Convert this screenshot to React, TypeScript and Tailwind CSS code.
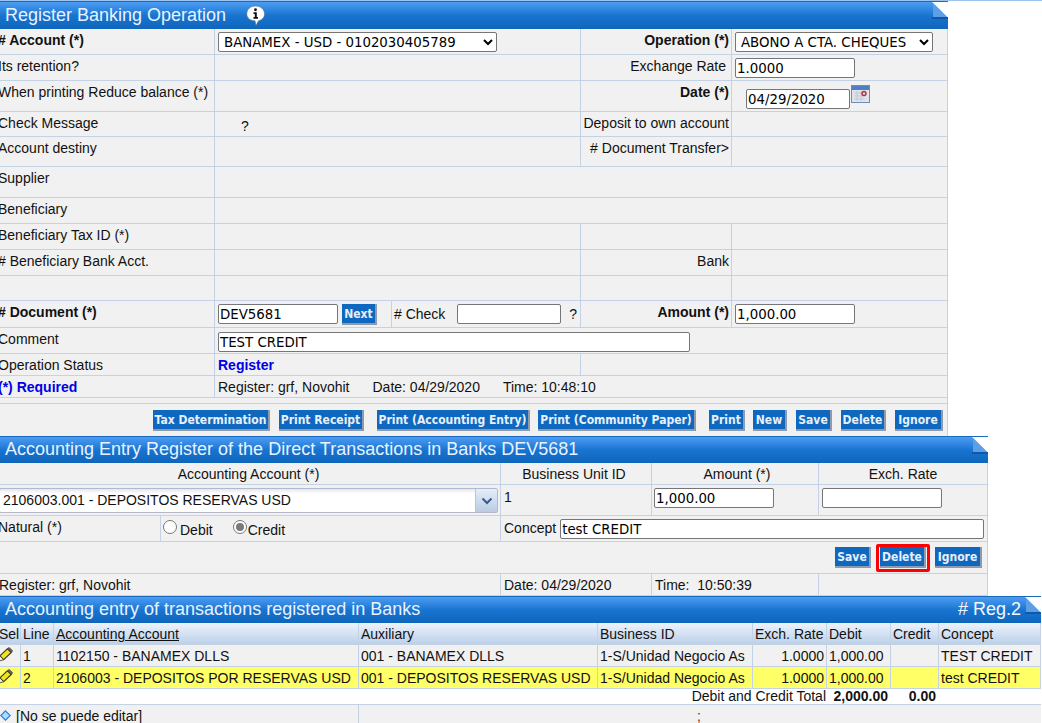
import type { ReactNode } from "react";

const input =
  "block h-[20px] rounded-[2px] border border-[#767676] bg-white px-[1px] [font-family:DejaVu_Sans,Verdana,sans-serif] text-[13.33px] text-black outline-none";

function Fold() {
  return (
    <svg className="absolute right-0 top-0" width="16" height="18" viewBox="0 0 16 18">
      <polygon points="0,0 16,0 16,16" fill="#ffffff" />
      <polygon points="1,1 15,15 1,15" fill="#5c9fe6" />
      <rect x="0" y="15" width="16" height="2" fill="#0d58a8" />
    </svg>
  );
}

function Header({ className = "h-[27px]", children }: { className?: string; children: ReactNode }) {
  return (
    <div className={"relative flex shrink-0 items-center justify-between border-t border-[#1a6abf] bg-gradient-to-b from-[#4b9df2] via-[#1874d1] to-[#0f65ba] pb-[2px] pl-[8px] pr-[20px] text-[18px] text-[#e8f3ff] " + className}>
      {children}
      <Fold />
    </div>
  );
}

function Cell({ className = "", children }: { className?: string; children?: ReactNode }) {
  return (
    <div className={"overflow-hidden whitespace-nowrap border-b border-r border-[#c3d2e5] " + className}>
      {children}
    </div>
  );
}

function Label({ children }: { children: ReactNode }) {
  return <Cell className="pl-[1px] pt-[3px]">{children}</Cell>;
}

function Btn({ className = "", children }: { className?: string; children: ReactNode }) {
  return (
    <button className={"h-[21px] shrink-0 border-b-2 border-r-2 border-[#8d9bad] bg-[#0f68bf] text-center [font-family:DejaVu_Sans_Condensed,DejaVu_Sans,Verdana,sans-serif] text-[12px] font-bold leading-[20px] text-[#e6f0fb] " + className}>
      {children}
    </button>
  );
}

function InfoIcon() {
  return (
    <svg className="ml-[20px] mt-[2px] shrink-0" width="20" height="21" viewBox="0 0 20 20" preserveAspectRatio="none">
      <path d="M9.5 1C14.5 1 18.5 4 18.5 8.5C18.5 12 15.5 14.5 12.5 15L10 19.5L9 15C4.5 15 0.8 12.5 0.8 8.5C0.8 4 4.5 1 9.5 1Z" fill="#fff" stroke="#5d7488" strokeWidth="0.6" />
      <circle cx="9.5" cy="4.6" r="1.4" fill="#111" />
      <path d="M7.5 7H10.8V11.5H12V13H7.5V11.5H8.8V8.5H7.5Z" fill="#111" />
    </svg>
  );
}

function CalendarIcon() {
  return (
    <svg className="shrink-0" width="19" height="18" viewBox="0 0 19 18">
      <rect x="0.5" y="0.5" width="18" height="17" fill="#dfe3ea" stroke="#6f8db3" />
      <rect x="1" y="1" width="17" height="4" fill="#4f7fc0" />
      <path d="M3 8H14M3 11H14M3 14H14M6 6V16M10 6V16" stroke="#c3c9d3" strokeWidth="1" />
      <circle cx="13" cy="8.5" r="2" fill="none" stroke="#b03040" strokeWidth="1.4" />
    </svg>
  );
}

function PencilIcon() {
  return (
    <svg className="shrink-0" width="15" height="15" viewBox="0 0 16 16">
      <polygon points="10,2 14,6 6,13.5 2,9.5" fill="#f2e21a" stroke="#3a3a24" strokeWidth="1.2" />
      <polygon points="10.5,1.5 12,0.5 15.5,4 14.5,5.8" fill="#6a6a6a" stroke="#333" strokeWidth="0.8" />
      <polygon points="2,9.5 6,13.5 0.8,15.2" fill="#f4f0dc" stroke="#3a3a24" strokeWidth="0.9" />
    </svg>
  );
}

function Diamond() {
  return (
    <svg className="shrink-0" width="11" height="11" viewBox="0 0 11 11">
      <polygon points="5.5,0.8 10.2,5.5 5.5,10.2 0.8,5.5" fill="#a8ddff" stroke="#2f7fe0" strokeWidth="1.2" />
    </svg>
  );
}

function Radio({ checked }: { checked?: boolean }) {
  return (
    <span className="mt-[4px] inline-flex h-[14px] w-[14px] shrink-0 items-center justify-center rounded-full border border-[#767676] bg-white">
      {checked && <span className="h-[8px] w-[8px] rounded-full bg-[#7a7a7a]" />}
    </span>
  );
}

function Operation() {
  const cols = "grid grid-cols-[218px_366px_151px_216px]";
  return (
    <div className="w-[951px]">
      <Header className="h-[28px]">
        <div className="flex items-center">
          Register Banking Operation
          <InfoIcon />
        </div>
      </Header>
      <div className="bg-[#f1f1f1]">
        <div className={cols + " h-[26px]"}>
          <Label><b># Account (*)</b></Label>
          <Cell className="pl-[3px] pt-[3px]">
            <select className={input + " w-[279px]"} defaultValue="a">
              <option value="a">BANAMEX - USD - 0102030405789</option>
            </select>
          </Cell>
          <Cell className="pr-[2px] pt-[3px] text-right"><b>Operation (*)</b></Cell>
          <Cell className="pl-[3px] pt-[3px]">
            <select className={input + " w-[198px]"} defaultValue="a">
              <option value="a">ABONO A CTA. CHEQUES</option>
            </select>
          </Cell>
        </div>
        <div className={cols + " h-[26px]"}>
          <Label>Its retention?</Label>
          <Cell />
          <Cell className="pr-[5px] pt-[3px] text-right">Exchange Rate</Cell>
          <Cell className="pl-[3px] pt-[3px]">
            <input readOnly value="1.0000" className={input + " w-[120px]"} />
          </Cell>
        </div>
        <div className={cols + " h-[31px]"}>
          <Label>When printing Reduce balance (*)</Label>
          <Cell />
          <Cell className="pr-[2px] pt-[3px] text-right"><b>Date (*)</b></Cell>
          <Cell className="flex items-start pl-[14px] pt-[4px]">
            <input readOnly value="04/29/2020" className={input + " mt-[4px] w-[104px]"} />
            <span className="ml-[1px]"><CalendarIcon /></span>
          </Cell>
        </div>
        <div className={cols + " h-[25px]"}>
          <Label>Check Message</Label>
          <Cell className="pl-[26px] pt-[6px]">?</Cell>
          <Cell className="pr-[2px] pt-[3px] text-right">Deposit to own account</Cell>
          <Cell />
        </div>
        <div className={cols + " h-[30px]"}>
          <Label>Account destiny</Label>
          <Cell />
          <Cell className="pr-[2px] pt-[3px] text-right"># Document Transfer&gt;</Cell>
          <Cell />
        </div>
        <div className="grid h-[31px] grid-cols-[218px_733px]">
          <Label>Supplier</Label>
          <Cell />
        </div>
        <div className="grid h-[26px] grid-cols-[218px_733px]">
          <Label>Beneficiary</Label>
          <Cell />
        </div>
        <div className={cols + " h-[26px]"}>
          <Label>Beneficiary Tax ID (*)</Label>
          <Cell />
          <Cell />
          <Cell />
        </div>
        <div className={cols + " h-[26px]"}>
          <Label># Beneficiary Bank Acct.</Label>
          <Cell />
          <Cell className="pr-[2px] pt-[3px] text-right">Bank</Cell>
          <Cell />
        </div>
        <div className={cols + " h-[25px]"}>
          <Cell />
          <Cell />
          <Cell />
          <Cell />
        </div>
        <div className="grid h-[27px] grid-cols-[218px_177px_189px_151px_216px]">
          <Label><b># Document (*)</b></Label>
          <Cell className="flex items-start gap-[4px] pl-[3px] pt-[3px]">
            <input readOnly value="DEV5681" className={input + " w-[120px]"} />
            <Btn className="w-[35px]">Next</Btn>
          </Cell>
          <Cell className="flex items-start pl-[2px] pt-[5px]">
            # Check
            <input readOnly value="" className={input + " ml-[12px] mt-[-2px] w-[104px]"} />
            <span className="ml-[8px]">?</span>
          </Cell>
          <Cell className="pr-[2px] pt-[3px] text-right"><b>Amount (*)</b></Cell>
          <Cell className="pl-[3px] pt-[3px]">
            <input readOnly value="1,000.00" className={input + " w-[120px]"} />
          </Cell>
        </div>
        <div className="grid h-[26px] grid-cols-[218px_733px]">
          <Label>Comment</Label>
          <Cell className="pl-[3px] pt-[4px]">
            <input readOnly value="TEST CREDIT" className={input + " w-[472px]"} />
          </Cell>
        </div>
        <div className="grid h-[22px] grid-cols-[218px_366px_367px]">
          <Label>Operation Status</Label>
          <Cell className="pl-[3px] pt-[3px] font-bold text-[#0000e6]">Register</Cell>
          <Cell />
        </div>
        <div className="grid h-[22px] grid-cols-[218px_733px]">
          <Cell className="pl-[1px] pt-[3px] font-bold text-[#0000e6]">(*) Required</Cell>
          <Cell className="flex gap-[23px] pl-[3px] pt-[3px]">
            <span>Register: grf, Novohit</span>
            <span>Date: 04/29/2020</span>
            <span>Time: 10:48:10</span>
          </Cell>
        </div>
        <div className="h-[6px] border-b border-r border-[#c3d2e5]" />
        <div className="flex h-[32px] items-center justify-end border-r border-[#c3d2e5] pr-[4px]">
          <Btn className="w-[117px]">Tax Determination</Btn>
          <Btn className="ml-[9px] w-[85px]">Print Receipt</Btn>
          <Btn className="ml-[13px] w-[153px]">Print (Accounting Entry)</Btn>
          <Btn className="ml-[8px] w-[158px]">Print (Community Paper)</Btn>
          <Btn className="ml-[13px] w-[36px]">Print</Btn>
          <Btn className="ml-[8px] w-[34px]">New</Btn>
          <Btn className="ml-[9px] w-[36px]">Save</Btn>
          <Btn className="ml-[9px] w-[45px]">Delete</Btn>
          <Btn className="ml-[9px] w-[48px]">Ignore</Btn>
        </div>
      </div>
    </div>
  );
}

function EntryForm() {
  const cols = "grid grid-cols-[504px_151px_167px_169px]";
  return (
    <div className="w-[991px]">
      <Header>Accounting Entry Register of the Direct Transactions in Banks DEV5681</Header>
      <div className="bg-[#f1f1f1]">
        <div className={cols + " h-[22px]"}>
          <Cell className="pt-[3px] text-center">Accounting Account (*)</Cell>
          <Cell className="pr-[4px] pt-[3px] text-center">Business Unit ID</Cell>
          <Cell className="pl-[4px] pt-[3px] text-center">Amount (*)</Cell>
          <Cell className="pt-[3px] text-center">Exch. Rate</Cell>
        </div>
        <div className={cols + " h-[31px]"}>
          <Cell className="pl-[2px] pt-[3px]">
            <div className="flex h-[25px] w-[499px] items-stretch rounded-[2px] border border-[#b5b8c8] bg-gradient-to-b from-[#e4e7ee] to-white to-20%">
              <span className="flex-1 pl-[3px] pt-[3px]">2106003.001 - DEPOSITOS RESERVAS USD</span>
              <span className="flex w-[22px] items-center justify-center border-l border-[#b5c6dc] bg-gradient-to-b from-[#e6eef8] to-[#b8cbe4]">
                <svg width="12" height="8" viewBox="0 0 12 8">
                  <path d="M1.5 1.5L6 6L10.5 1.5" fill="none" stroke="#3a5a8c" strokeWidth="2" />
                </svg>
              </span>
            </div>
          </Cell>
          <Cell className="pl-[3px] pt-[4px]">1</Cell>
          <Cell className="pl-[2px] pt-[3px]">
            <input readOnly value="1,000.00" className={input + " w-[120px]"} />
          </Cell>
          <Cell className="pl-[3px] pt-[3px]">
            <input readOnly value="" className={input + " w-[120px]"} />
          </Cell>
        </div>
        <div className="grid h-[26px] grid-cols-[164px_340px_487px]">
          <Label>Natural (*)</Label>
          <Cell className="flex pl-[2px]">
            <Radio />
            <span className="ml-[3px] pt-[6px]">Debit</span>
            <span className="ml-[20px] flex">
              <Radio checked />
              <span className="ml-[1px] pt-[6px]">Credit</span>
            </span>
          </Cell>
          <Cell className="flex items-start pl-[3px] pt-[3px]">
            <span className="pt-[1px]">Concept</span>
            <input readOnly value="test CREDIT" className={input + " ml-[4px] w-[424px]"} />
          </Cell>
        </div>
        <div className="flex h-[32px] items-center justify-end border-b border-r border-[#c3d2e5] pr-[5px]">
          <Btn className="w-[36px]">Save</Btn>
          <span className="ml-[5px] flex h-[28px] w-[54px] items-center justify-center rounded-[2px] border-[3px] border-[#ff0000]">
            <Btn className="w-[46px]">Delete</Btn>
          </span>
          <Btn className="ml-[5px] w-[47px]">Ignore</Btn>
        </div>
        <div className={cols + " h-[22px]"}>
          <Cell className="pl-[2px] pt-[3px]">Register: grf, Novohit</Cell>
          <Cell className="pl-[3px] pt-[3px]">Date: 04/29/2020</Cell>
          <Cell className="whitespace-pre pl-[3px] pt-[3px]">Time:  10:50:39</Cell>
          <Cell />
        </div>
      </div>
    </div>
  );
}

const rows = [
  ["1", "1102150 - BANAMEX DLLS", "001 - BANAMEX DLLS", "TEST CREDIT"],
  ["2", "2106003 - DEPOSITOS POR RESERVAS USD", "001 - DEPOSITOS RESERVAS USD", "test CREDIT"],
];

function EntryTable() {
  const cols = "grid grid-cols-[24px_33px_305px_239px_155px_74px_64px_48px_102px]";
  const head = "border-b border-r border-[#c3d2e5] pl-[2px] pt-[3px] whitespace-nowrap overflow-hidden";
  return (
    <div className="w-[1044px]">
      <Header>
        <span>Accounting entry of transactions registered in Banks</span>
        <span className="text-[#f4f9ff]"># Reg.2</span>
      </Header>
      <div className={cols + " h-[22px] bg-gradient-to-b from-[#eef3fb] to-[#b9cfe8]"}>
        <div className={head + " pl-[1px]"}>Sel</div>
        <div className={head}>Line</div>
        <div className={head + " underline"}>Accounting Account</div>
        <div className={head}>Auxiliary</div>
        <div className={head}>Business ID</div>
        <div className={head}>Exch. Rate</div>
        <div className={head}>Debit</div>
        <div className={head}>Credit</div>
        <div className={head}>Concept</div>
      </div>
      {rows.map((r, i) => (
        <div key={r[0]} className={cols + " h-[22px] " + (i === 1 ? "bg-[#ffff66]" : "bg-[#f1f1f1]")}>
          <div className="border-b border-r border-[#c3d2e5] pl-[1px] pt-[2px]"><PencilIcon /></div>
          <div className={head}>{r[0]}</div>
          <div className={head}>{r[1]}</div>
          <div className={head}>{r[2]}</div>
          <div className={head}>1-S/Unidad Negocio As</div>
          <div className={head + " pr-[2px] text-right"}>1.0000</div>
          <div className={head}>1,000.00</div>
          <div className={head} />
          <div className={head}>{r[3]}</div>
        </div>
      ))}
      <div className={cols + " h-[15px] bg-white leading-[15px]"}>
        <div className="col-span-6 pr-[1px] text-right">Debit and Credit Total</div>
        <div className="pr-[3px] text-right font-bold">2,000.00</div>
        <div className="pr-[3px] text-right font-bold">0.00</div>
        <div />
      </div>
      <div className="grid h-[20px] grid-cols-[362px_682px] border-t border-[#c3d2e5] bg-[#f1f1f1]">
        <div className="flex items-center gap-[5px] border-r border-[#c3d2e5] pl-[3px] pt-[2px]">
          <Diamond />
          <span>[No se puede editar]</span>
        </div>
        <div className="pl-[338px] pt-[3px] text-[#8a1a1a]">;</div>
      </div>
    </div>
  );
}

export default function App() {
  return (
    <div className="h-[723px] w-full overflow-hidden bg-white [font-family:Liberation_Sans,Arial,sans-serif] text-[14px] leading-[16px] text-[#111]">
      <div className="h-px bg-[#9cc3f0]" />
      <div className="-ml-[3px]">
        <Operation />
        <EntryForm />
        <EntryTable />
      </div>
    </div>
  );
}
